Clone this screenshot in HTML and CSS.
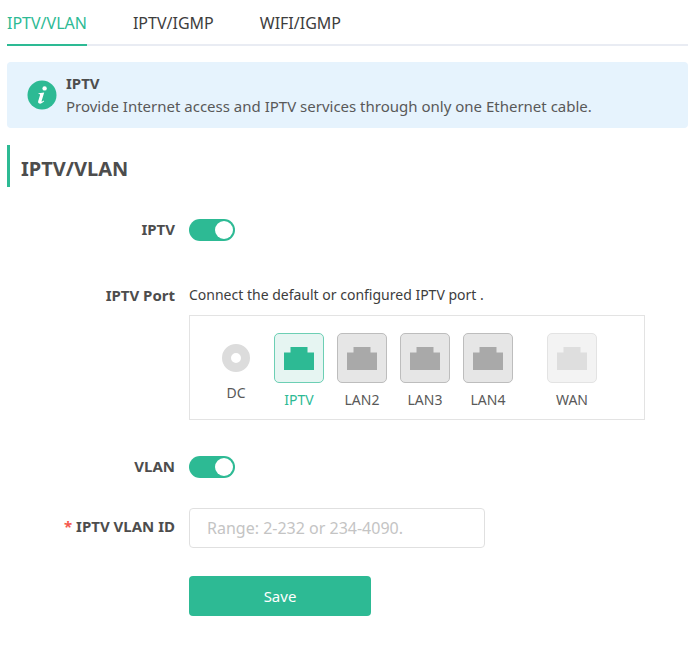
FILE: index.html
```html
<!DOCTYPE html>
<html>
    <head>
        <title>IPTV</title>
        <meta charset="UTF-8">
        <link rel="stylesheet" href="styles.css">
    </head>
    <body>
        <div class="tabs">
            <div class="tab ativo">IPTV/VLAN</div>
            <div class="tab">IPTV/IGMP</div>
            <div class="tab">WIFI/IGMP</div>
        </div>

        <div class="aviso">
            <svg class="aviso-icone" width="30" height="30" viewBox="0 0 30 30">
                <circle cx="15" cy="15" r="14.5" fill="#2dba94"/>
                <circle cx="17.6" cy="8.4" r="2.2" fill="#fff"/>
                <path d="M11.6 13.2 L17.2 12.4 L14.6 21 C14.4 21.9 15 22 16.8 20.6 L17.2 21.2 C15 23.4 13.6 23.9 12.2 23.5 C11 23.1 10.9 22 11.3 20.8 L13 15.2 C13.2 14.4 12.8 14.1 11.5 14 Z" fill="#fff"/>
            </svg>
            <div>
                <div class="aviso-titulo">IPTV</div>
                <div class="aviso-texto">Provide Internet access and IPTV services through only one Ethernet cable.</div>
            </div>
        </div>

        <h2 class="secao">IPTV/VLAN</h2>

        <div class="linha linha-iptv">
            <label class="rotulo">IPTV</label>
            <div class="chave"></div>
        </div>

        <div class="linha linha-porta">
            <label class="rotulo">IPTV Port</label>
            <div>
                <div class="descricao">Connect the default or configured IPTV port .</div>
                <div class="portas">
                    <div class="porta porta-dc">
                        <div class="dc"></div>
                        <span>DC</span>
                    </div>
                    <div class="porta selecionada">
                        <div class="soquete"><svg width="30" height="24" viewBox="0 0 30 24"><path d="M0 6.500H6.500V1H23.500V6.500H30V24H0Z"/></svg></div>
                        <span>IPTV</span>
                    </div>
                    <div class="porta">
                        <div class="soquete"><svg width="30" height="24" viewBox="0 0 30 24"><path d="M0 6.500H6.500V1H23.500V6.500H30V24H0Z"/></svg></div>
                        <span>LAN2</span>
                    </div>
                    <div class="porta">
                        <div class="soquete"><svg width="30" height="24" viewBox="0 0 30 24"><path d="M0 6.500H6.500V1H23.500V6.500H30V24H0Z"/></svg></div>
                        <span>LAN3</span>
                    </div>
                    <div class="porta">
                        <div class="soquete"><svg width="30" height="24" viewBox="0 0 30 24"><path d="M0 6.500H6.500V1H23.500V6.500H30V24H0Z"/></svg></div>
                        <span>LAN4</span>
                    </div>
                    <div class="porta porta-wan">
                        <div class="soquete"><svg width="30" height="24" viewBox="0 0 30 24"><path d="M0 6.500H6.500V1H23.500V6.500H30V24H0Z"/></svg></div>
                        <span>WAN</span>
                    </div>
                </div>
            </div>
        </div>

        <div class="linha linha-vlan">
            <label class="rotulo">VLAN</label>
            <div class="chave"></div>
        </div>

        <div class="linha linha-id">
            <label class="rotulo"><span class="obrigatorio">*</span> IPTV VLAN ID</label>
            <input class="campo" type="text" placeholder="Range: 2-232 or 234-4090.">
        </div>

        <div class="linha">
            <div class="rotulo"></div>
            <button class="salvar">Save</button>
        </div>
    </body>
</html>
```

FILE: styles.css
```css
* {
    margin: 0;
    padding: 0;
    box-sizing: border-box;
    font-family: "Noto Sans", sans-serif;
}
body {
    background-color: #fff;
    color: #4d4d4d;
    padding-left: 7px;
    overflow: hidden;
}
.tabs {
    display: flex;
    gap: 46px;
    height: 46px;
    border-bottom: 2px solid #e9ecf3;
}
.tab {
    height: 46px;
    padding-top: 11px;
    font-size: 16px;
    line-height: 24px;
    color: #3d3d3d;
}
.tab.ativo {
    color: #2dba94;
    border-bottom: 2px solid #2dba94;
}
.aviso {
    display: flex;
    align-items: center;
    gap: 9px;
    height: 66px;
    margin-top: 16px;
    padding-left: 20px;
    background-color: #e6f3fd;
    border-radius: 4px;
}
.aviso-icone {
    display: block;
    flex: none;
}
.aviso-titulo {
    font-size: 15px;
    font-weight: bold;
    line-height: 22px;
    color: #4d4d4d;
}
.aviso-texto {
    font-size: 15px;
    line-height: 24px;
    color: #595959;
}
.secao {
    height: 42px;
    margin-top: 17px;
    padding-left: 11px;
    border-left: 3px solid #2dba94;
    font-size: 20px;
    line-height: 48px;
    color: #4d4d4d;
}
.linha {
    display: flex;
    gap: 14px;
}
.rotulo {
    width: 168px;
    flex: none;
    text-align: right;
    font-size: 15px;
    font-weight: bold;
    line-height: 22px;
    color: #4d4d4d;
}
.linha-iptv {
    margin-top: 31px;
}
.linha-porta {
    margin-top: 43px;
}
.linha-vlan {
    margin-top: 35px;
}
.linha-id {
    margin-top: 37px;
}
.chave {
    position: relative;
    width: 46px;
    height: 22px;
    margin-top: 1px;
    border-radius: 11px;
    background-color: #2dba94;
}
.chave::after {
    content: "";
    position: absolute;
    top: 2px;
    right: 2px;
    width: 18px;
    height: 18px;
    border-radius: 50%;
    background-color: #fff;
}
.descricao {
    font-size: 14px;
    line-height: 22px;
    color: #3d3d3d;
}
.portas {
    display: flex;
    width: 456px;
    height: 105px;
    margin-top: 9px;
    padding: 17px 0 0 21px;
    border: 2px solid #e3e3e3;
    border-width: 1px;
    gap: 13px;
}
.porta {
    width: 50px;
    text-align: center;
    font-size: 14px;
    line-height: 20px;
    color: #595959;
}
.porta span {
    display: block;
    margin-top: 7px;
}
.porta-dc {
    width: 54px;
    margin-left: -2px;
    margin-right: -2px;
}
.porta-wan {
    margin-left: 21px;
}
.dc {
    width: 28px;
    height: 28px;
    margin: 11px auto 11px;
    border-radius: 50%;
    background-color: #dcdcdc;
    border: 9px solid #dcdcdc;
    background-color: #fff;
}
.soquete {
    display: flex;
    align-items: center;
    justify-content: center;
    width: 50px;
    height: 50px;
    border: 1px solid #bdbdbd;
    border-radius: 5px;
    background-color: #e6e6e6;
}
.soquete svg {
    display: block;
    fill: #a9a9a9;
}
.selecionada span {
    color: #2dba94;
}
.selecionada .soquete {
    border-color: #6ccfb4;
    background-color: #e6f5f2;
}
.selecionada .soquete svg {
    fill: #2dba94;
}
.porta-wan .soquete {
    border-color: #e3e3e3;
    background-color: #f3f3f3;
}
.porta-wan .soquete svg {
    fill: #dedede;
}
.obrigatorio {
    color: #f5594e;
}
.campo {
    width: 296px;
    height: 40px;
    margin-top: -7px;
    padding-left: 17px;
    border: 1px solid #e0e0e0;
    border-radius: 4px;
    font-size: 16px;
    outline: none;
}
.campo::placeholder {
    color: #c4c4c4;
}
.salvar {
    width: 182px;
    height: 40px;
    margin-top: 28px;
    border: 0;
    border-radius: 4px;
    background-color: #2dba94;
    color: #fff;
    font-size: 15px;
}
```
